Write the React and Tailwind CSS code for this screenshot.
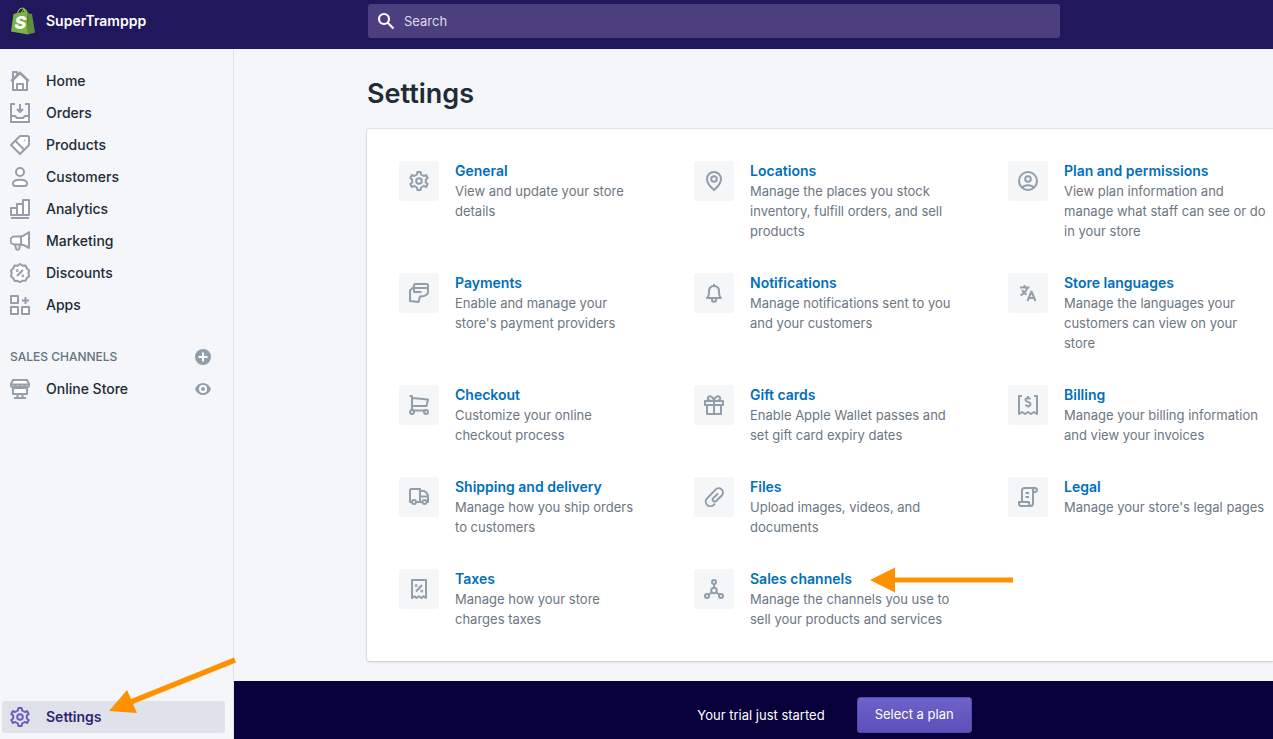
const icons = {
  home: (
    <>
      <path fill="#fff" d="M3 9v10h14V9l-7-6.500z" />
      <path d="M1 10l1.500-1.500M19 10l-9-8.500-7.500 7M3 8.500V1h4v3M7 19v-6h6v6" />
    </>
  ),
  orders: (
    <>
      <path fill="#fff" stroke="none" d="M1 13h5l2 2h4l2-2h5v6H1z" />
      <path d="M5 1H1v18h18V1h-4M1 13h4l2 2h6l2-2h4M10 1v8M7 6l3 3 3-3" />
    </>
  ),
  products: (
    <>
      <path fill="#fff" d="M10 1h8l1 1v8l-9 9-9-9z" />
      <path d="M5.500 6l9 9" />
      <circle cx="14.500" cy="5.500" r=".4" strokeWidth="1" />
    </>
  ),
  customers: (
    <>
      <circle fill="#fff" cx="10" cy="5" r="4" />
      <path fill="#fff" d="M3 16.500c0-5 14-5 14 0 0 1.500-1 2.500-2.500 2.500h-9C4 19 3 18 3 16.500z" />
    </>
  ),
  analytics: (
    <>
      <path fill="#fff" d="M1 9h6v7H1zM7 5h6v11H7zM13 1h6v15h-6z" />
      <path d="M1 19h18" />
    </>
  ),
  marketing: (
    <>
      <path fill="#fff" d="M19 1v16c-3-2-5-3.500-9-3.500H4.500a4 4 0 0 1 0-8H10c4 0 6-2.500 9-4.500z" />
      <path d="M5 13.500l1 4c.5 1.800 3.500 1.500 3.500-.5v-3M11 5.500v8" />
    </>
  ),
  discounts: (
    <>
      <path
        fill="#fff"
        d="M10 1l2.500 1.700 3.100-.1 1.200 2.800 2.300 2-.7 2.900.7 2.900-2.400 1.900-1.300 2.700-3-.1L10 19.300l-2.400-1.500-3 .1-1.300-2.700L1 13.200l.7-2.900L1 7.400l2.300-2 1.200-2.800 3.100.1z"
      />
      <path d="M7 13l6-6" />
      <circle cx="7.200" cy="7.500" r=".5" />
      <circle cx="12.800" cy="12.700" r=".5" />
    </>
  ),
  apps: (
    <>
      <path fill="#fff" d="M1 1h7v7H1zM1 12h7v7H1zM12 12h7v7h-7z" />
      <path d="M15.500 2v7M12 5.500h7" />
    </>
  ),
  store: (
    <>
      <path fill="#fff" d="M3 9h14v6H3z" />
      <path d="M8 15l-1 4M12 15l1 4M4 19h12" />
      <path fill="#fff" d="M3 1h14l2 4v1c0 3-4 3-4.500 0-.5 3-4 3-4.500 0-.5 3-4 3-4.500 0-.5 3-4.500 3-4.500 0V5z" />
      <path d="M1 5.500h18" />
    </>
  ),
  gear: (
    <>
      <path d="M8.400 1h3.200l.5 2.500L14.700 5l2.400-.9 1.600 2.800-1.900 1.600v3l1.900 1.600-1.600 2.800-2.400-.9-2.600 1.500-.5 2.500H8.400l-.5-2.500L5.300 15l-2.400.9-1.600-2.800 1.900-1.600v-3L1.300 6.900l1.600-2.800 2.400.9 2.600-1.500z" />
      <circle cx="10" cy="10" r="2.800" />
    </>
  ),
  pin: (
    <>
      <path d="M10 19c-3.500-3-7-6.800-7-11a7 7 0 0 1 14 0c0 4.200-3.500 8-7 11z" />
      <circle cx="10" cy="8" r="2.800" />
    </>
  ),
  person: (
    <>
      <circle cx="10" cy="10" r="9" />
      <circle cx="10" cy="8" r="2.800" />
      <path d="M4.500 16.500c2-3 9-3 11 0" />
    </>
  ),
  payments: (
    <path d="M5 4.500H4L1 7.500v10.500l8.500 1 1.500-5.500 4-.5c2.500-.7 4-2 4-4.500V2l-1-1H6L5 2v7h7.500M5 5h14" />
  ),
  bell: (
    <>
      <path d="M10 1v1.500M3 15c2-1.500 2-3.500 2-6.500C5 5 7 3 10 3s5 2 5 5.500c0 3 0 5 2 6.500z" />
      <path d="M8 16v1c0 2.300 4 2.300 4 0v-1" />
    </>
  ),
  translate: (
    <path d="M2 4.500h9.500M6.500 2v2.500M9.500 4.500C8.500 8 6 10.500 2.500 12.500M4 7c1 2 2.500 3.500 4.500 4.500M9.500 18l4-9.500 4 9.500M11 15h5" />
  ),
  cart: (
    <>
      <path d="M.500 1H3v14.500M3 3l16 1.500-1.500 6.500H3M3.500 15.500H17" />
      <circle cx="3" cy="17" r="2" />
      <circle cx="17" cy="17" r="2" />
    </>
  ),
  gift: (
    <>
      <path d="M1 6h18v4H1zM3 10v9h14v-9M10 6v13" />
      <path d="M10 6C5 6 3 4.500 4 2.500S9 1 10 5.500c1-4.500 5-5 6-3S15 6 10 6z" />
    </>
  ),
  billing: (
    <>
      <path d="M4 1H1v18l3-2 3 2 3-2 3 2 3-2 3 2V1h-3" />
      <path d="M12.500 4c-1-1-5-1.200-5 1s5 1.500 5 4-4 2.300-5 .8M10 1v1.500M10 11v1.500" />
    </>
  ),
  truck: (
    <>
      <path d="M3 15H1V3l1-1h9v13H7.500M11 4h4c2.500 1 4 3 4 6v5h-1.500M13.500 15H11M12 9.500h6" />
      <circle cx="5" cy="15" r="2" />
      <circle cx="15.500" cy="15" r="2" />
    </>
  ),
  clip: (
    <path d="M11 16.800l-1 .8a4.600 4.600 0 0 1-7.200-6L11.500 2.600a4.300 4.300 0 0 1 6.300 5.900l-5.600 5.500a2 2 0 0 1-2.900-2.900L14 6.500" />
  ),
  legal: (
    <>
      <path d="M4 15V3.500C4 2 5 1 6.500 1H17c2.500 0 2.500 4 0 4h-2v11c0 4-4 4-4 0v-1H1v1.500C1 18 2 19 3.500 19h9.500M15 5V3c0-1 .8-2 2-2" />
      <path d="M7.500 6H11M7.500 10H11" />
    </>
  ),
  taxes: (
    <>
      <path d="M3 1h14v18l-2.500-1.800L12.500 19 10 17.200 7.500 19l-2-1.800L3 19z" />
      <path d="M7 12.500l6-6.500" />
      <circle cx="7.200" cy="6.500" r=".5" />
      <circle cx="12.800" cy="12" r=".5" />
    </>
  ),
  network: (
    <>
      <circle cx="10" cy="3" r="2" />
      <circle cx="10" cy="11.500" r="2.800" />
      <circle cx="3" cy="17" r="2" />
      <circle cx="17" cy="17" r="2" />
      <path d="M10 5v3.700M7.700 13.200l-3 2.500M12.300 13.200l3 2.500" />
    </>
  ),
};

const navItems = [
  { label: "Home", icon: "home" },
  { label: "Orders", icon: "orders" },
  { label: "Products", icon: "products" },
  { label: "Customers", icon: "customers" },
  { label: "Analytics", icon: "analytics" },
  { label: "Marketing", icon: "marketing" },
  { label: "Discounts", icon: "discounts" },
  { label: "Apps", icon: "apps" },
];

const settings = [
  { title: "General", icon: "gear", text: "View and update your store details" },
  { title: "Locations", icon: "pin", text: "Manage the places you stock inventory, fulfill orders, and sell products" },
  { title: "Plan and permissions", icon: "person", text: "View plan information and manage what staff can see or do in your store" },
  { title: "Payments", icon: "payments", text: "Enable and manage your store's payment providers" },
  { title: "Notifications", icon: "bell", text: "Manage notifications sent to you and your customers" },
  { title: "Store languages", icon: "translate", text: "Manage the languages your customers can view on your store" },
  { title: "Checkout", icon: "cart", text: "Customize your online checkout process" },
  { title: "Gift cards", icon: "gift", text: "Enable Apple Wallet passes and set gift card expiry dates" },
  { title: "Billing", icon: "billing", text: "Manage your billing information and view your invoices" },
  { title: "Shipping and delivery", icon: "truck", text: "Manage how you ship orders to customers" },
  { title: "Files", icon: "clip", text: "Upload images, videos, and documents" },
  { title: "Legal", icon: "legal", text: "Manage your store's legal pages" },
  { title: "Taxes", icon: "taxes", text: "Manage how your store charges taxes" },
  { title: "Sales channels", icon: "network", text: "Manage the channels you use to sell your products and services", arrow: true },
];

function Icon({ name, className }) {
  return (
    <svg
      viewBox="0 0 20 20"
      className={className}
      fill="none"
      stroke="currentColor"
      strokeWidth="2"
      strokeLinejoin="round"
      aria-hidden="true"
    >
      {icons[name]}
    </svg>
  );
}

function Logo() {
  return (
    <svg viewBox="0 0 26 28" className="h-7 w-[26px] shrink-0" aria-hidden="true">
      <path d="M7 8c.5-4 3-7 5.500-7S15 4 15 8M11 8c.5-4 2.500-6 4-5.500s2 2.500 2 5" fill="none" stroke="#95bf47" strokeWidth="1.200" />
      <path d="M3.500 7L17 4l1 23.500L1 24.500z" fill="#7ab541" />
      <path d="M17 4l2 2.500 3 .5 3 18.500-7 2z" fill="#5e8e3e" />
      <text
        x="4.500"
        y="22"
        fontFamily="Inter, sans-serif"
        fontSize="18"
        fontWeight="800"
        fontStyle="italic"
        fill="#fff"
      >
        S
      </text>
    </svg>
  );
}

function NavLink({ item, children }) {
  return (
    <a href="#" className="flex h-8 items-center gap-4 pl-2.5 text-sm font-medium text-[#212b36]">
      <Icon name={item.icon} className="size-5 text-[#959eaa]" />
      {item.label}
      {children}
    </a>
  );
}

function SettingItem({ item }) {
  return (
    <li className="flex items-start gap-4">
      <span className="flex size-10 shrink-0 items-center justify-center rounded-[3px] bg-[#f4f6f8] text-[#919eab]">
        <Icon name={item.icon} className="size-5" />
      </span>
      <div className="text-[13px] leading-5 text-[#6b7682]">
        <h2 className="relative text-sm leading-5 font-semibold text-[#006fbb]">
          <a href="#">{item.title}</a>
          {item.arrow ? (
            <svg viewBox="0 0 144 26" className="absolute -top-0.5 left-[120px] h-[26px] w-36" aria-hidden="true">
              <path d="M0 13L25 .5V10.500H143v5H25v10z" fill="#ff9100" />
            </svg>
          ) : null}
        </h2>
        <p>{item.text}</p>
      </div>
    </li>
  );
}

export default function App() {
  return (
    <div className="flex min-h-screen flex-col bg-[#f4f6f9] font-['Inter',sans-serif] text-[#212b36]">
      <header className="flex h-[49px] bg-[#21175c] text-white">
        <a href="#" className="flex w-[234px] shrink-0 items-start gap-2.5 pt-[7px] pl-2.5 text-sm leading-7 font-semibold">
          <Logo />
          SuperTramppp
        </a>
        <div className="flex-1 pt-1 pr-[213px] pl-[134px]">
          <label className="flex h-[34px] items-center gap-2 rounded-[3px] bg-[#4b3f80] pl-2">
            <svg viewBox="0 0 20 20" className="size-5 shrink-0" fill="none" stroke="#fff" strokeWidth="2.200" aria-hidden="true">
              <circle cx="8" cy="8" r="5" />
              <path d="M11.500 11.500L17.500 17.500" />
            </svg>
            <input
              type="search"
              aria-label="Search"
              placeholder="Search"
              className="h-full w-full bg-transparent text-[13px] outline-none placeholder:text-[#dedbea]"
            />
          </label>
        </div>
      </header>

      <div className="flex flex-1">
        <aside className="flex w-[234px] shrink-0 flex-col border-r border-[#dfe3e8] pt-4">
          <nav>
            {navItems.map((item) => (
              <NavLink key={item.label} item={item} />
            ))}
          </nav>

          <div className="mt-5 flex h-8 items-center justify-between pr-[22px] pl-2.5">
            <h2 className="text-xs font-medium text-[#637381]">SALES CHANNELS</h2>
            <button type="button" aria-label="Add sales channel">
              <svg viewBox="0 0 16 16" className="size-4">
                <circle cx="8" cy="8" r="8" fill="#919eab" />
                <path d="M8 3.500v9M3.500 8h9" stroke="#fff" strokeWidth="2" />
              </svg>
            </button>
          </div>
          <NavLink item={{ label: "Online Store", icon: "store" }}>
            <svg viewBox="0 0 16 12" className="mr-[22px] ml-auto h-3 w-4" aria-hidden="true">
              <path d="M0 6C3-2 13-2 16 6 13 14 3 14 0 6z" fill="#919eab" />
              <circle cx="8" cy="6" r="3" fill="#919eab" stroke="#fff" strokeWidth="2" />
            </svg>
          </NavLink>

          <div className="relative mt-auto mb-1.5 pr-2 pl-0.5">
            <a href="#" className="flex h-8 items-center gap-4 rounded-[3px] bg-[#dfe1eb] pl-2 text-sm font-semibold text-[#2f2373]">
              <Icon name="gear" className="size-5 text-[#6a5fc0]" />
              Settings
            </a>
            <svg viewBox="0 0 128 56" className="absolute -top-11 left-[109px] h-14 w-32" aria-hidden="true">
              <path d="M0 54L18 33l4 9L125 .5l2 5L24 47l4 9z" fill="#ff9100" />
            </svg>
          </div>
        </aside>

        <div className="flex min-w-0 flex-1 flex-col">
          <main className="flex-1 pt-[25px] pb-5 pl-[133px]">
            <h1 className="text-[27px] leading-10 font-semibold">Settings</h1>
            <section className="mt-[15px] rounded-l-[3px] bg-white py-8 pr-1 pl-8 shadow-[0_0_0_1px_rgba(63,63,68,0.08),0_1px_3px_0_rgba(63,63,68,0.2)]">
              <ul className="grid grid-cols-[247fr_266fr_261fr] gap-x-12 gap-y-8">
                {settings.map((item) => (
                  <SettingItem key={item.title} item={item} />
                ))}
              </ul>
            </section>
          </main>

          <footer className="flex items-start justify-center bg-[#07003b] pt-4 pb-1.5 pl-[162px] text-[13px] text-white">
            <p className="pr-8 leading-9">Your trial just started</p>
            <button
              type="button"
              className="h-9 rounded-[3px] border border-[#5449a9] bg-linear-to-b from-[#6d62c9] to-[#5c51ba] px-[17px]"
            >
              Select a plan
            </button>
          </footer>
        </div>
      </div>
    </div>
  );
}
